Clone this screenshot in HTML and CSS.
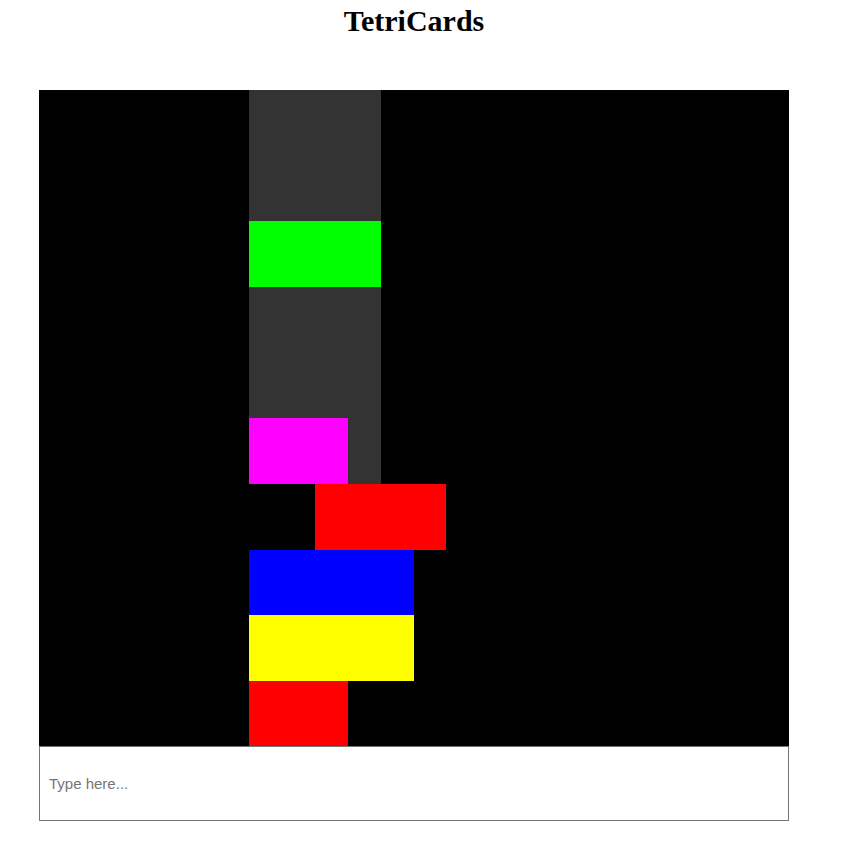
FILE: index.html
```
<!DOCTYPE html>
<html>
<head>
<meta charset="utf-8">
<title>TetriCards</title>
<link rel="stylesheet" href="styles.css">
</head>
<body>
<div class="app">
  <h1 class="title">TetriCards</h1>
  <div class="board">
    <div class="cell well"></div>
    <div class="cell green"></div>
    <div class="cell magenta"></div>
    <div class="cell red1"></div>
    <div class="cell blue"></div>
    <div class="cell yellow"></div>
    <div class="cell red2"></div>
  </div>
  <input class="entry" type="text" placeholder="Type here...">
</div>
</body>
</html>
```
FILE: styles.css
```
html, body {
  margin: 0;
  padding: 0;
  background: #fff;
}
.app {
  width: 750px;
  margin-left: 39px;
  display: flex;
  flex-direction: column;
}
.title {
  margin: 4px 0 52px 0;
  font-family: "Liberation Serif", "Times New Roman", serif;
  font-weight: bold;
  font-size: 30px;
  line-height: 34px;
  text-align: center;
  color: #000;
}
.board {
  width: 750px;
  height: 656px;
  background: #000;
  display: grid;
  grid-template-columns: 210px repeat(7, 33px) 1fr;
  grid-template-rows: 65.5px 65.5px 66px 65.5px 65.5px 66px 66px 65px 66px 65px;
}
.well { grid-column: 2 / span 4; grid-row: 1 / span 6; background: #333333; }
.green { grid-column: 2 / span 4; grid-row: 3; background: #00ff00; }
.magenta { grid-column: 2 / span 3; grid-row: 6; background: #ff00ff; }
.red1 { grid-column: 4 / span 4; grid-row: 7; background: #ff0000; margin-right: 1px; }
.blue { grid-column: 2 / span 5; grid-row: 8; background: #0000ff; }
.yellow { grid-column: 2 / span 5; grid-row: 9; background: #ffff00; }
.red2 { grid-column: 2 / span 3; grid-row: 10; background: #ff0000; }
.entry {
  box-sizing: border-box;
  width: 750px;
  height: 75px;
  margin: 0;
  border: 1px solid #767676;
  padding: 0 9px;
  font-family: "Liberation Sans", Arial, sans-serif;
  font-size: 15px;
  color: #000;
  background: #fff;
  outline: none;
}
.entry::placeholder {
  color: #757575;
}
```
